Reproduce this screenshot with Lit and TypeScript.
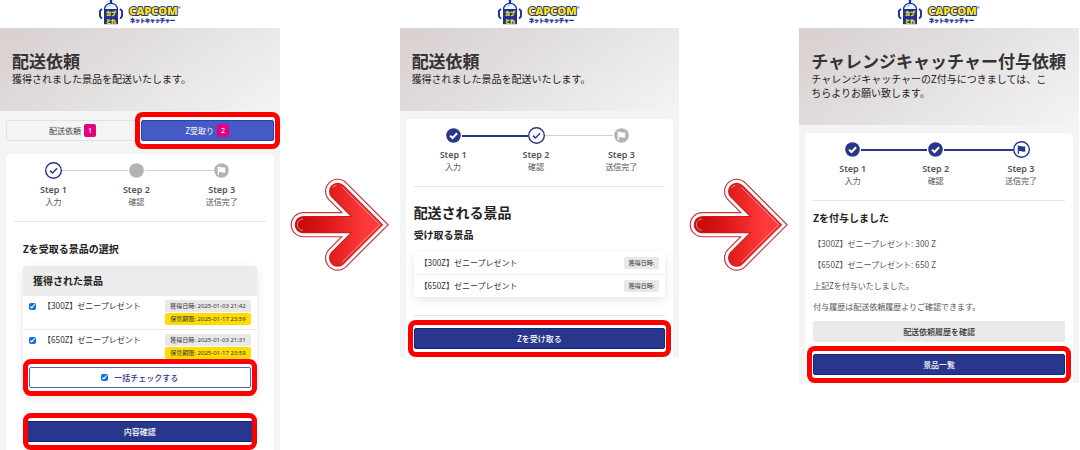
import { LitElement, html, css, svg, nothing } from "lit";
import { customElement, property } from "lit/decorators.js";

type StepState = "done" | "current" | "todo";

const NAVY = "#28378c";

@customElement("site-logo")
class SiteLogo extends LitElement {
  static styles = css`
    :host { display: block; }
    .logo { display: block; margin: 0 auto; }
    .brand { font: 800 11px "Open Sans", sans-serif; fill: #ffe600; stroke: #1c2f9c; stroke-width: 2px; paint-order: stroke; stroke-linejoin: round; }
    .kana { font: 900 5px "Noto Sans CJK JP", sans-serif; fill: #1c2f9c; stroke: #1c2f9c; stroke-width: 0.3px; }
    .mark { font: 700 5px "Noto Sans CJK JP", sans-serif; fill: #ffe600; stroke: #ffe600; stroke-width: 0.3px; }
    .reg { font: 700 3px "Open Sans", sans-serif; fill: #1c2f9c; }
  `;
  render() {
    return html`<svg class="logo" width="84" height="28" viewBox="0 0 84 28" role="img" aria-label="CAPCOM">
      <path d="M13 0v4" stroke="#1c2f9c" stroke-width="2.400" />
      <path d="M6.500 9.500C6.800 5.200 9.500 3.300 13 3.300S19.200 5.200 19.500 9.500z" fill="#eef7ff" stroke="#1c2f9c" stroke-width="1.200" />
      <path d="M9 7.500q1.500-2.300 4-2.500" fill="none" stroke="#8bbcf0" stroke-width="1" />
      <path d="M6 9.500h14v14.700H6z" fill="#1c2f9c" />
      <path d="M4 8.800L2 10.800v5.400l1.800 2.600M22 8.800l2 2v5.400l-1.800 2.600" fill="none" stroke="#1c2f9c" stroke-width="1.900" />
      <text class="mark" x="8" y="15">カプ</text>
      <text class="mark" x="8" y="23">とれ</text>
      <text class="brand" x="31" y="15">CAPCOM</text>
      <text class="reg" x="80" y="9">®</text>
      <text class="kana" x="32" y="22">ネットキャッチャー</text>
    </svg>`;
  }
}

@customElement("progress-steps")
class ProgressSteps extends LitElement {
  @property({ type: Number }) current = 1;

  static styles = css`
    :host { display: block; }
    .steps { display: flex; margin: 0; padding: 0 28px 0 26px; list-style: none; }
    .step { flex: none; display: flex; flex-direction: column; align-items: center; color: #555; }
    .icon { display: block; margin-bottom: 5px; }
    .name { font-size: 9px; line-height: 12px; font-weight: 600; }
    .label { font-size: 8px; line-height: 12px; }
    .line { flex: 1; height: 1px; margin: 8px -5px 0; background: #cfcfcf; }
    .line.wide { flex-basis: 3px; margin-right: -8px; }
    .line.done { height: 2px; background: #28378c; }
  `;

  icon(n: number, state: StepState) {
    const ink = state === "current" ? NAVY : "#fff";
    const disc =
      state === "current"
        ? svg`<circle cx="8.500" cy="8.500" r="7.800" fill="#fff" stroke=${NAVY} stroke-width="1.400" />`
        : svg`<circle cx="8.500" cy="8.500" r="7.300" fill=${state === "done" ? NAVY : "#b3b3b3"} />`;
    const check = svg`<path d="M5 8.600l2.500 2.400 4.600-4.700" fill="none" stroke=${ink} stroke-width=${state === "done" ? 2 : 1.5} />`;
    const flag = svg`<path d="M5.300 4.500v8.500" stroke=${ink} stroke-width="1.200" /><path d="M5.500 5.200c2-1 3.800 1 6.700 0v5.200c-2.900 1-4.700-1-6.700 0z" fill=${ink} />`;
    const glyph = n === 3 ? flag : state === "todo" ? nothing : check;
    return html`<svg class="icon" width="17" height="17" viewBox="0 0 17 17" aria-hidden="true">${disc}${glyph}</svg>`;
  }

  render() {
    const labels = ["入力", "確認", "送信完了"];
    return html`<ol class="steps">
      ${labels.map((label, i) => {
        const n = i + 1;
        const state: StepState = n < this.current ? "done" : n === this.current ? "current" : "todo";
        return html`
          ${i ? html`<li role="presentation" class="line ${i === 2 ? "wide" : ""} ${n <= this.current ? "done" : ""}"></li>` : nothing}
          <li class="step">${this.icon(n, state)}<span class="name">Step ${n}</span><span class="label">${label}</span></li>`;
      })}
    </ol>`;
  }
}

@customElement("flow-arrow")
class FlowArrow extends LitElement {
  static styles = css`
    :host { display: grid; place-items: center; }
  `;
  render() {
    const d = "M55 164H240M158 64L258 164L158 264";
    const layer = (color: string, width: number) =>
      svg`<path d=${d} fill="none" stroke=${color} stroke-width=${width} stroke-linecap="round" stroke-linejoin="miter" />`;
    return html`<svg width="110" height="110" viewBox="0 0 330 330" aria-hidden="true">
      <defs>
        <linearGradient id="red" gradientUnits="userSpaceOnUse" x1="30" y1="0" x2="240" y2="0">
          <stop offset="0" stop-color="#c40808" />
          <stop offset="0.500" stop-color="#de1a1a" />
          <stop offset="1" stop-color="#ff3a3a" />
        </linearGradient>
      </defs>
      ${layer("#d2303a", 76)} ${layer("#fff", 69)} ${layer("#cf1a1f", 52)} ${layer("url(#red)", 46)}
      <path d="M172 52L284 164L172 276" fill="none" stroke="#fff" stroke-opacity="0.700" stroke-width="2" />
      <path d="M54 147a17 17 0 0 0 0 34M142 54a17 17 0 0 1 12-8" fill="none" stroke="#fff" stroke-opacity="0.600" stroke-width="2.500" />
    </svg>`;
  }
}

@customElement("app-root")
class AppRoot extends LitElement {
  static styles = css`
    :host { display: block; background: #fff; color: #333; font-family: "Noto Sans", "Noto Sans CJK JP", sans-serif; }
    * { box-sizing: border-box; }
    h1, h2, h3, p, ul { margin: 0; padding: 0; }
    ul { list-style: none; }
    .flow { display: grid; grid-template-columns: 7fr 3fr 7fr 3fr 7fr; min-height: 100vh; padding-right: 1px; }
    .screen { min-width: 0; align-self: start; background: #f4f4f4; }
    .screen.full { align-self: stretch; display: flex; flex-direction: column; }
    .screen.full .card { flex: 1; }
    .top { height: 28px; background: #fff; }
    .hero { padding: 23px 12px 25px; background: linear-gradient(145deg, #d9cfcf 0%, #e2dfdf 45%, #f4f4f4 100%); }
    .hero-title { font-size: 17px; line-height: 21px; font-weight: 700; white-space: nowrap; }
    .hero-text { padding-right: 12px; font-size: 10px; line-height: 14px; color: #222; }
    .tabs { display: grid; grid-template-columns: 1fr 1fr; gap: 2px; align-items: center; padding: 6px 6px 0; }
    .card { margin: 8px 6px 0; padding: 8px 8px 5px; background: #fff; border-radius: 5px 5px 0 0; }
    .tabs + .card { margin-top: 10px; }
    .rule { height: 1px; margin: 13px 0 0; border: 0; background: #e4e4e4; }
    .rule.after-list { margin: 18px 0 9px; }

    .btn { display: flex; align-items: center; justify-content: center; gap: 6px; width: 100%; height: 21px; margin: 0; padding: 0; border: 1px solid transparent; border-radius: 2px; font: 500 8px/12px "Noto Sans", "Noto Sans CJK JP", sans-serif; text-decoration: none; color: #333; }
    .btn.primary { background: #28378c; border-color: #13237e; color: #fff; }
    .btn.grey { background: #eaeaea; margin: 4px 0 9px; }
    .btn.outline { background: #fff; border-color: #5664a8; color: #28378c; }
    .btn.tab { border-color: #e2e2e2; background: #f4f4f4; gap: 3px; color: #444; font-weight: 400; }
    .btn.tab.on { background: #465ac6; border-color: #2a3fb8; color: #fff; }
    .count { padding: 0 4px; border-radius: 2px; background: #e4007f; color: #fff; font-size: 7px; line-height: 13px; font-weight: 500; }
    .mark { position: relative; margin: 0 -1px; padding: 3px 1px; border-radius: 3px; background: #fff; box-shadow: 0 0 0 5px #f00; }
    .mark.last { margin: 23px 5px 0; padding: 3px 0; }
    .mark.last .btn { border-radius: 0; border-inline: 0; }
    .mark.bulk { margin-top: 1px; }

    .section { padding: 20px 9px 0; }
    .head { font-size: 10px; line-height: 14px; font-weight: 700; color: #222; }
    .head.large { margin: 17px 0 6px; font-size: 14px; line-height: 18px; }
    .head.result { margin: 10px 0 8px; }
    .box { margin-top: 10px; border-radius: 4px; background: #fff; box-shadow: 0 3px 10px rgba(0, 0, 0, 0.1); }
    .box-head { padding: 8px 10px; border-radius: 4px 4px 0 0; background: #ebebeb; }
    .box-foot { padding: 0 6px 4px; }
    .item { display: flex; justify-content: space-between; align-items: flex-start; padding: 4px 6px; font-size: 8px; line-height: 12px; }
    .item.single { padding-block: 5px; }
    .item + .item { border-top: 1px solid #ececec; }
    .pick { display: flex; align-items: center; gap: 7px; }
    .check { width: 7px; height: 7px; margin: 0; accent-color: #0a6fe8; }
    .dates { display: grid; gap: 1px; }
    .badge { padding: 0 5px; border-radius: 2px; background: #e8e8e8; font-size: 6px; line-height: 12px; white-space: nowrap; }
    .badge.due { background: #ffdc00; }
    .line { font-size: 8px; line-height: 21px; color: #555; }
  `;

  hero(title: string, text: string) {
    return html`<header class="top"><site-logo></site-logo></header>
      <div class="hero"><h1 class="hero-title">${title}</h1><p class="hero-text">${text}</p></div>`;
  }

  render() {
    const prizes = [
      { name: "【300Z】ゼニープレゼント", won: "2025-01-03 21:42", due: "2025-01-17 23:59", z: 300 },
      { name: "【650Z】ゼニープレゼント", won: "2025-01-03 21:31", due: "2025-01-17 23:59", z: 650 },
    ];
    return html`<main class="flow">
      <section class="screen full">
        ${this.hero("配送依頼", "獲得されました景品を配送いたします。")}
        <nav class="tabs">
          <button class="btn tab">配送依頼<span class="count">1</span></button>
          <div class="mark"><button class="btn tab on">Z受取り<span class="count">2</span></button></div>
        </nav>
        <div class="card">
          <progress-steps .current=${1}></progress-steps>
          <hr class="rule" />
          <div class="section">
            <h2 class="head">Zを受取る景品の選択</h2>
            <div class="box">
              <h3 class="head box-head">獲得された景品</h3>
              <ul>
                ${prizes.map(
                  (p) => html`<li class="item">
                    <label class="pick"><input class="check" type="checkbox" checked />${p.name}</label>
                    <div class="dates"><span class="badge">獲得日時: ${p.won}</span><span class="badge due">保管期限: ${p.due}</span></div>
                  </li>`
                )}
              </ul>
              <div class="box-foot">
                <div class="mark bulk"><label class="btn outline"><input class="check" type="checkbox" checked />一括チェックする</label></div>
              </div>
            </div>
            <div class="mark last"><button class="btn primary">内容確認</button></div>
          </div>
        </div>
      </section>
      <flow-arrow></flow-arrow>
      <section class="screen">
        ${this.hero("配送依頼", "獲得されました景品を配送いたします。")}
        <div class="card">
          <progress-steps .current=${2}></progress-steps>
          <hr class="rule" />
          <h2 class="head large">配送される景品</h2>
          <h3 class="head">受け取る景品</h3>
          <ul class="box">
            ${prizes.map((p) => html`<li class="item single"><span>${p.name}</span><span class="badge">獲得日時:</span></li>`)}
          </ul>
          <hr class="rule after-list" />
          <div class="mark"><button class="btn primary">Zを受け取る</button></div>
        </div>
      </section>
      <flow-arrow></flow-arrow>
      <section class="screen">
        ${this.hero("チャレンジキャッチャー付与依頼", "チャレンジキャッチャーのZ付与につきましては、こちらよりお願い致します。")}
        <div class="card">
          <progress-steps .current=${3}></progress-steps>
          <hr class="rule" />
          <h2 class="head result">Zを付与しました</h2>
          ${prizes.map((p) => html`<p class="line">${p.name}: ${p.z} Z</p>`)}
          <p class="line">上記Zを付与いたしました。</p>
          <p class="line">付与履歴は配送依頼履歴よりご確認できます。</p>
          <a class="btn grey" href="#history">配送依頼履歴を確認</a>
          <div class="mark"><a class="btn primary" href="#prizes">景品一覧</a></div>
        </div>
      </section>
    </main>`;
  }
}
